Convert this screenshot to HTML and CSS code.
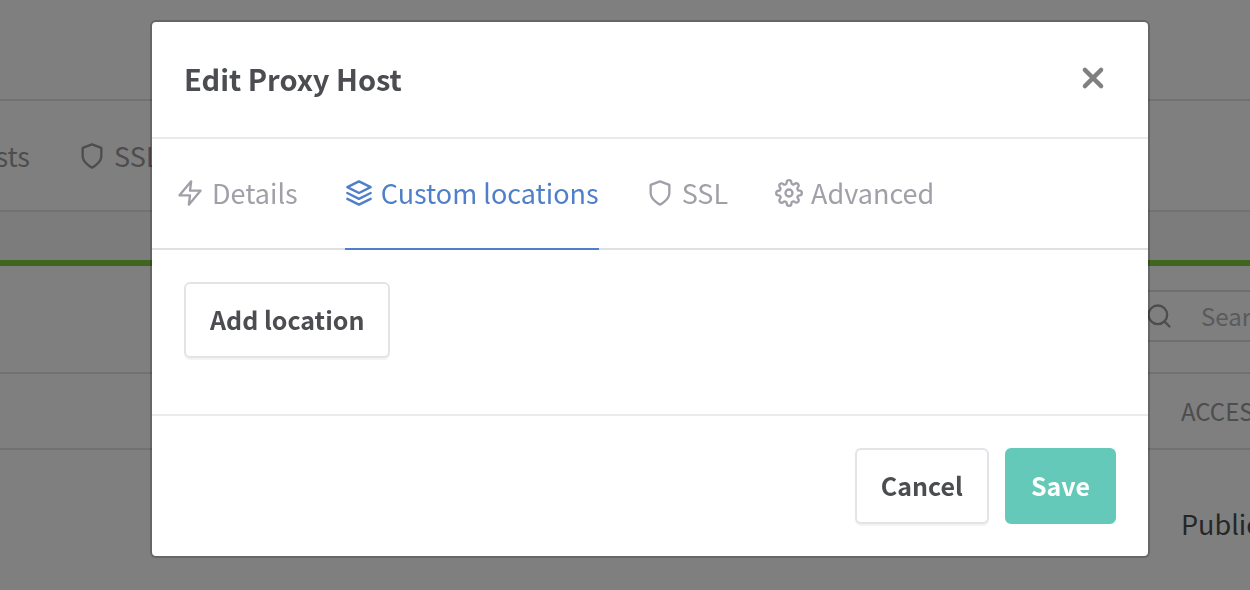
FILE: index.html
```html
<!DOCTYPE html>
<html lang="en">
<head>
<meta charset="utf-8">
<meta name="viewport" content="width=device-width, initial-scale=1">
<title>Edit Proxy Host</title>
<link rel="stylesheet" href="styles.css">
</head>
<body>
<div class="page">
  <header class="page-header"></header>
  <nav class="page-nav">
    <a class="page-link page-link-first" href="#hosts">sts</a>
    <a class="page-link" href="#ssl">
      <svg class="icon" viewBox="0 0 24 24"><path d="M12 22s8-4 8-10V5l-8-3-8 3v7c0 6 8 10 8 10z"/></svg>
      SSL
    </a>
  </nav>
  <main class="card">
    <div class="card-header">
      <label class="search">
        <svg class="icon search-icon" viewBox="0 0 24 24"><circle cx="11" cy="11" r="8"/><path d="M21 21l-4.350-4.350"/></svg>
        <input class="search-input" type="search" placeholder="Search" aria-label="Search">
      </label>
    </div>
    <table class="hosts">
      <thead><tr><th>ACCESS</th></tr></thead>
      <tbody><tr><td>Public</td></tr></tbody>
    </table>
  </main>
</div>

<div class="backdrop">
  <section class="modal" role="dialog" aria-modal="true" aria-labelledby="modal-title">
    <header class="modal-header">
      <h1 class="modal-title" id="modal-title">Edit Proxy Host</h1>
      <button class="close" type="button" aria-label="Close">
        <svg class="close-icon" viewBox="0 0 24 24"><path d="M4.500 4.500l15 15M19.500 4.500l-15 15"/></svg>
      </button>
    </header>
    <nav class="tabs">
      <a class="tab" href="#details">
        <svg class="icon" viewBox="0 0 24 24"><path d="M13 2L3 14h9l-1 8 10-12h-9l1-8z"/></svg>
        Details
      </a>
      <a class="tab tab-active" href="#locations" aria-current="page">
        <svg class="icon" viewBox="0 0 24 24"><path d="M12 2L2 7l10 5 10-5-10-5z"/><path d="M2 17l10 5 10-5M2 12l10 5 10-5"/></svg>
        Custom locations
      </a>
      <a class="tab" href="#ssl-options">
        <svg class="icon" viewBox="0 0 24 24"><path d="M12 22s8-4 8-10V5l-8-3-8 3v7c0 6 8 10 8 10z"/></svg>
        SSL
      </a>
      <a class="tab" href="#advanced">
        <svg class="icon" viewBox="0 0 24 24"><circle cx="12" cy="12" r="3"/><path d="M19.4 15a1.650 1.650 0 0 0 .33 1.820l.06.06a2 2 0 0 1 0 2.830 2 2 0 0 1-2.830 0l-.06-.06a1.650 1.650 0 0 0-1.820-.33 1.650 1.650 0 0 0-1 1.510V21a2 2 0 0 1-2 2 2 2 0 0 1-2-2v-.09A1.650 1.650 0 0 0 9 19.4a1.650 1.650 0 0 0-1.820.33l-.06.06a2 2 0 0 1-2.830 0 2 2 0 0 1 0-2.830l.06-.06a1.650 1.650 0 0 0 .33-1.820 1.650 1.650 0 0 0-1.510-1H3a2 2 0 0 1-2-2 2 2 0 0 1 2-2h.09A1.650 1.650 0 0 0 4.600 9a1.650 1.650 0 0 0-.33-1.820l-.06-.06a2 2 0 0 1 0-2.830 2 2 0 0 1 2.830 0l.06.06a1.650 1.650 0 0 0 1.820.33H9a1.650 1.650 0 0 0 1-1.510V3a2 2 0 0 1 2-2 2 2 0 0 1 2 2v.09a1.650 1.650 0 0 0 1 1.510 1.650 1.650 0 0 0 1.820-.33l.06-.06a2 2 0 0 1 2.830 0 2 2 0 0 1 0 2.830l-.06.06a1.650 1.650 0 0 0-.33 1.820V9a1.650 1.650 0 0 0 1.510 1H21a2 2 0 0 1 2 2 2 2 0 0 1-2 2h-.09a1.650 1.650 0 0 0-1.510 1z"/></svg>
        Advanced
      </a>
    </nav>
    <div class="modal-body">
      <button class="btn" type="button">Add location</button>
    </div>
    <footer class="modal-footer">
      <button class="btn" type="button">Cancel</button>
      <button class="btn btn-save" type="button">Save</button>
    </footer>
  </section>
</div>
</body>
</html>
```
FILE: styles.css
```css
* {
  box-sizing: border-box;
}

body {
  margin: 0;
  overflow: hidden;
  background: #f8f8fa;
  color: #4b4d51;
  font-family: "Noto Sans CJK SC", "Open Sans", sans-serif;
  font-size: 27px;
  line-height: 44px;
}

a {
  color: inherit;
  text-decoration: none;
}

.icon {
  flex: none;
  width: 28px;
  height: 28px;
  fill: none;
  stroke: currentColor;
  stroke-width: 2;
  stroke-linecap: round;
  stroke-linejoin: round;
}

/* Page behind the dialog */
.page {
  display: flex;
  flex-direction: column;
  height: 100vh;
  overflow: hidden;
}

.page-header {
  flex: none;
  height: 101px;
  background: #fff;
  border-bottom: 2px solid #e2e2e4;
}

.page-nav {
  display: flex;
  gap: 48px;
  padding: 33px 0 32px;
  background: #fff;
  border-bottom: 2px solid #e2e2e4;
  color: #9a9a9e;
}

.page-link {
  display: flex;
  align-items: center;
  gap: 8px;
}

.page-link-first {
  justify-content: flex-end;
  width: 30px;
}

.card {
  flex: 1;
  margin-top: 48px;
  border-top: 6px solid #7eca3c;
  background: #fff;
}

.card-header {
  display: flex;
  justify-content: flex-end;
  padding: 24px 0 30px;
  border-bottom: 2px solid #e2e2e4;
}

.search {
  display: flex;
  align-items: center;
  gap: 28px;
  width: 118px;
  height: 52px;
  padding-left: 13px;
  border: solid #dcdce0;
  border-width: 2px 0;
  color: #9a9a9e;
}

.search-input {
  width: 160px;
  padding: 0;
  border: 0;
  background: transparent;
  color: inherit;
  font: inherit;
  font-size: 24px;
}

.search-input::placeholder {
  color: #b4b4b8;
}

.hosts {
  width: 100%;
  border-collapse: collapse;
  text-align: left;
}

.hosts th,
.hosts td {
  padding: 15px 0 15px calc(100% - 69px);
}

.hosts th {
  border-bottom: 2px solid #e2e2e4;
  color: #9a9a9e;
  font-size: 24px;
  font-weight: 400;
}

.hosts td {
  padding-top: 52px;
}

/* Dialog */
.backdrop {
  position: fixed;
  inset: 0;
  padding: 20px 100px 0 150px;
  background: rgba(0, 0, 0, 0.5);
}

.modal {
  background: #fff;
  background-clip: padding-box;
  border: 2px solid rgba(0, 0, 0, 0.2);
  border-radius: 6px;
}

.modal-header {
  display: flex;
  align-items: center;
  justify-content: space-between;
  padding: 33px 32px 36px;
  border-bottom: 2px solid #e9ecef;
}

.modal-title {
  margin: 0;
  font-size: 29px;
  line-height: 44px;
  font-weight: 700;
}

.close {
  display: flex;
  padding: 10px;
  border: 0;
  background: none;
  color: #808080;
}

.close-icon {
  width: 26px;
  height: 26px;
  fill: none;
  stroke: currentColor;
  stroke-width: 4;
  stroke-linecap: round;
}

.tabs {
  display: flex;
  gap: 47px;
  padding: 0 24px;
  border-bottom: 2px solid #e0e0e2;
  color: #a0a1a8;
}

.tab {
  display: flex;
  align-items: center;
  gap: 8px;
  margin-bottom: -2px;
  padding: 32px 0 33px;
  border-bottom: 2px solid transparent;
}

.tab-active {
  border-color: #4f7fc8;
  color: #4f7fc8;
}

.modal-body {
  padding: 32px 32px 56px;
}

.modal-footer {
  display: flex;
  justify-content: flex-end;
  gap: 16px;
  padding: 32px;
  border-top: 2px solid #e9ecef;
}

.btn {
  padding: 13px 24px 15px;
  border: 2px solid #e2e4e8;
  border-radius: 6px;
  background: #fff;
  box-shadow: 0 2px 1px rgba(0, 0, 0, 0.05);
  color: #4b4d51;
  font: inherit;
  font-size: 25px;
  font-weight: 700;
}

.btn-save {
  border-color: #64c9b8;
  background: #64c9b8;
  box-shadow: none;
  color: #fff;
}
```
